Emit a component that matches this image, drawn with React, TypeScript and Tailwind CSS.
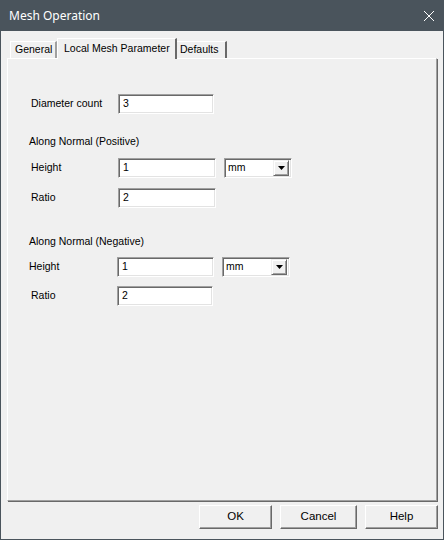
import React from "react"

const ui = { fontFamily: '"Liberation Sans", Arial, sans-serif' }

// sunken edit box frame
function TextBox({ value, w }: { value: string; w: string }) {
  return (
    <div
      className={`${w} h-[20px] bg-white border border-t-[#a0a0a0] border-l-[#a0a0a0] border-r-white border-b-white shadow-[inset_1px_1px_0_#696969,inset_-1px_-1px_0_#e3e3e3] flex items-center pl-[4px] text-[10.5px] text-black`}
    >
      {value}
    </div>
  )
}

function UnitSelect({ value }: { value: string }) {
  return (
    <div className="w-[68px] h-[20px] bg-white border border-t-[#a0a0a0] border-l-[#a0a0a0] border-r-white border-b-white shadow-[inset_1px_1px_0_#696969,inset_-1px_-1px_0_#e3e3e3] flex items-center pl-[3px] pr-[2px] text-[10.5px] text-black">
      <span className="flex-1">{value}</span>
      <div className="w-[16px] h-[16px] bg-[#f0f0f0] border border-t-[#f0f0f0] border-l-[#f0f0f0] border-r-[#696969] border-b-[#696969] shadow-[inset_1px_1px_0_#ffffff,inset_-1px_-1px_0_#a0a0a0] flex items-center justify-center">
        <svg width="7" height="4" viewBox="0 0 7 4">
          <path d="M0 0h7L3.5 4z" fill="#000" />
        </svg>
      </div>
    </div>
  )
}

function PushButton({ label, w }: { label: string; w: string }) {
  return (
    <div
      className={`${w} h-[24px] bg-[#f0f0f0] border border-t-white border-l-white border-r-[#696969] border-b-[#696969] shadow-[inset_-1px_-1px_0_#a0a0a0] flex items-center justify-center text-[11.5px] text-black`}
    >
      {label}
    </div>
  )
}

export default function App() {
  return (
    <div className="w-[444px] h-[540px] flex flex-col bg-[#4a545c] px-px pb-px" style={ui}>
      {/* caption */}
      <div className="h-[31px] flex items-center justify-between pl-[8px] pr-[8px] text-white">
        <span className="text-[12px]" style={{ fontFamily: '"Noto Sans", "Open Sans", sans-serif' }}>
          Mesh Operation
        </span>
        <svg width="12" height="12" viewBox="0 0 12 12">
          <path d="M1 1L11 11M11 1L1 11" stroke="#fff" strokeWidth="1" />
        </svg>
      </div>

      <div className="flex-1 bg-[#f0f0f0] flex flex-col pt-[7px]">
        {/* tab strip */}
        <div className="h-[20px] flex items-end pl-[9px] text-[10.5px] text-black">
          <div className="w-[47px] h-[17px] border-t border-l border-white border-r-2 border-r-[#a0a0a0] flex items-center pl-[4px]">
            General
          </div>
          <div className="relative z-10 w-[120px] h-[21px] -mb-px bg-[#f0f0f0] border-t border-l border-white border-r-2 border-r-[#696969] flex items-start pt-[2px] pl-[6px] text-[10.5px]">
            Local Mesh Parameter
          </div>
          <div className="w-[50px] h-[17px] border-t border-white border-r-2 border-r-[#696969] flex items-center pl-[3px]">
            Defaults
          </div>
        </div>

        {/* tab page */}
        <div className="ml-[6px] w-[430px] h-[443px] border border-t-white border-l-white border-r-[#a0a0a0] border-b-[#a0a0a0] shadow-[1px_1px_0_0_#696969] flex flex-col text-[10.5px] text-black">
          <div className="mt-[35px] h-[20px] flex items-center pl-[23px]">
            <span className="w-[87px]">Diameter count</span>
            <TextBox value="3" w="w-[96px]" />
          </div>

          <div className="mt-[21px] h-[14px] flex items-center pl-[21px]">Along Normal (Positive)</div>
          <div className="mt-[9px] h-[20px] flex items-center pl-[23px]">
            <span className="w-[87px]">Height</span>
            <TextBox value="1" w="w-[98px]" />
            <div className="w-[8px]" />
            <UnitSelect value="mm" />
          </div>
          <div className="mt-[10px] h-[20px] flex items-center pl-[23px]">
            <span className="w-[87px]">Ratio</span>
            <TextBox value="2" w="w-[98px]" />
          </div>

          <div className="mt-[27px] h-[14px] flex items-center pl-[21px]">Along Normal (Negative)</div>
          <div className="mt-[8px] h-[20px] flex items-center pl-[21px]">
            <span className="w-[88px]">Height</span>
            <TextBox value="1" w="w-[97px]" />
            <div className="w-[8px]" />
            <UnitSelect value="mm" />
          </div>
          <div className="mt-[9px] h-[20px] flex items-center pl-[23px]">
            <span className="w-[86px]">Ratio</span>
            <TextBox value="2" w="w-[96px]" />
          </div>
        </div>

        {/* dialog buttons */}
        <div className="mt-[4px] flex justify-end gap-[8px] pr-[5px]">
          <PushButton label="OK" w="w-[73px]" />
          <PushButton label="Cancel" w="w-[77px]" />
          <PushButton label="Help" w="w-[73px]" />
        </div>
      </div>
    </div>
  )
}
